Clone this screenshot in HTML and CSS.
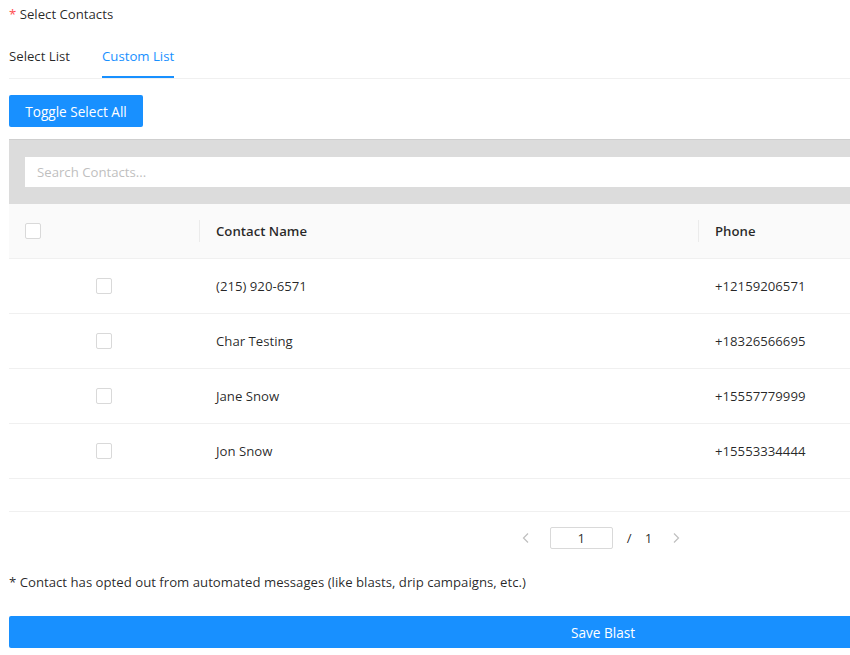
FILE: index.html
```html
<!DOCTYPE html>
<html lang="en">
<head>
<meta charset="utf-8">
<title>Select Contacts</title>
<link rel="stylesheet" href="styles.css">
</head>
<body>
<div class="page">
  <div class="label"><span class="req">*</span> Select Contacts</div>
  <div class="tabs">
    <div class="tab">Select List</div>
    <div class="tab active">Custom List</div>
  </div>
  <button class="btn btn-toggle">Toggle Select All</button>
  <div class="search-bar">
    <input class="search" type="text" placeholder="Search Contacts...">
  </div>
  <div class="table">
    <div class="row head">
      <div class="cell check-head"><span class="cb"></span></div>
      <div class="cell"><span class="div"></span><span class="th">Contact Name</span></div>
      <div class="cell"><span class="div"></span><span class="th">Phone</span></div>
    </div>
    <div class="row">
      <div class="cell check"><span class="cb"></span></div>
      <div class="cell td">(215) 920-6571</div>
      <div class="cell td">+12159206571</div>
    </div>
    <div class="row">
      <div class="cell check"><span class="cb"></span></div>
      <div class="cell td">Char Testing</div>
      <div class="cell td">+18326566695</div>
    </div>
    <div class="row">
      <div class="cell check"><span class="cb"></span></div>
      <div class="cell td">Jane Snow</div>
      <div class="cell td">+15557779999</div>
    </div>
    <div class="row">
      <div class="cell check"><span class="cb"></span></div>
      <div class="cell td">Jon Snow</div>
      <div class="cell td">+15553334444</div>
    </div>
    <div class="table-foot"></div>
  </div>
  <div class="pager">
    <span class="arrow">
      <svg width="12" height="12" viewBox="0 0 12 12"><path d="M8 1.5 L3.5 6 L8 10.5" fill="none" stroke="#bfbfbf" stroke-width="1.2"/></svg>
    </span>
    <span class="page-input">1</span>
    <span class="slash">/</span>
    <span class="total">1</span>
    <span class="arrow">
      <svg width="12" height="12" viewBox="0 0 12 12"><path d="M4 1.5 L8.5 6 L4 10.5" fill="none" stroke="#bfbfbf" stroke-width="1.2"/></svg>
    </span>
  </div>
  <div class="note">* Contact has opted out from automated messages (like blasts, drip campaigns, etc.)</div>
  <button class="btn btn-save">Save Blast</button>
</div>
</body>
</html>
```
FILE: styles.css
```css
html, body {
  margin: 0;
  padding: 0;
  overflow: hidden;
  background: #fff;
}
body {
  font-family: "Open Sans", "Noto Sans", sans-serif;
  font-size: 13.2px;
  color: rgba(0, 0, 0, 0.85);
}
.page {
  width: 1188px;
  padding-left: 9px;
  display: flex;
  flex-direction: column;
}
.label {
  height: 28px;
  line-height: 28px;
  margin-bottom: 4px;
}
.req {
  color: #ff4d4f;
}
.tabs {
  display: flex;
  gap: 32px;
  border-bottom: 1px solid #f0f0f0;
  margin-bottom: 16px;
}
.tab {
  padding: 13px 0 9px;
  line-height: 22px;
  border-bottom: 2px solid transparent;
}
.tab.active {
  color: #1890ff;
  border-bottom-color: #1890ff;
}
.btn {
  font-family: inherit;
  font-size: 13.6px;
  white-space: nowrap;
  border: none;
  border-radius: 2px;
  background: #1890ff;
  color: #fff;
  height: 32px;
  padding: 0 15px;
  cursor: pointer;
}
.btn-toggle {
  align-self: flex-start;
  width: 134px;
  margin-bottom: 12px;
}
.search-bar {
  background: #dcdcdc;
  border-top: 1px solid #cfcfcf;
  padding: 17px 0 17px 16px;
}
.search {
  display: block;
  width: 100%;
  box-sizing: border-box;
  height: 30px;
  border: none;
  padding: 0 12px;
  font-family: inherit;
  font-size: 13.2px;
  background: #fff;
  outline: none;
}
.search::placeholder {
  color: #bfbfbf;
}
.row {
  display: grid;
  grid-template-columns: 190px 499px 1fr;
  height: 54px;
  border-bottom: 1px solid #f0f0f0;
}
.row.head {
  background: #fafafa;
  font-weight: 600;
}
.cell {
  display: flex;
  align-items: center;
}
.check-head {
  padding-left: 16px;
}
.check {
  justify-content: center;
}
.td {
  padding-left: 17px;
}
.div {
  width: 1px;
  height: 22px;
  background: rgba(0, 0, 0, 0.06);
}
.th {
  margin-left: 16px;
}
.cb {
  width: 16px;
  height: 16px;
  box-sizing: border-box;
  border: 1px solid #d9d9d9;
  border-radius: 2px;
  background: #fff;
}
.table-foot {
  height: 32px;
  border-bottom: 1px solid #f0f0f0;
}
.pager {
  display: flex;
  align-items: center;
  justify-content: center;
  height: 24px;
  margin: 14px 0 0;
  padding-right: 4px;
}
.arrow {
  display: flex;
  width: 24px;
  justify-content: center;
}
.page-input {
  width: 63px;
  height: 22px;
  box-sizing: border-box;
  border: 1px solid #d9d9d9;
  border-radius: 2px;
  text-align: center;
  line-height: 20px;
  margin: 0 12px 0 12px;
}
.slash {
  margin: 0 13px 0 2px;
}
.total {
  margin-right: 12px;
}
.note {
  margin-top: 21px;
  line-height: 22px;
}
.btn-save {
  margin-top: 23px;
  width: 100%;
}
```
